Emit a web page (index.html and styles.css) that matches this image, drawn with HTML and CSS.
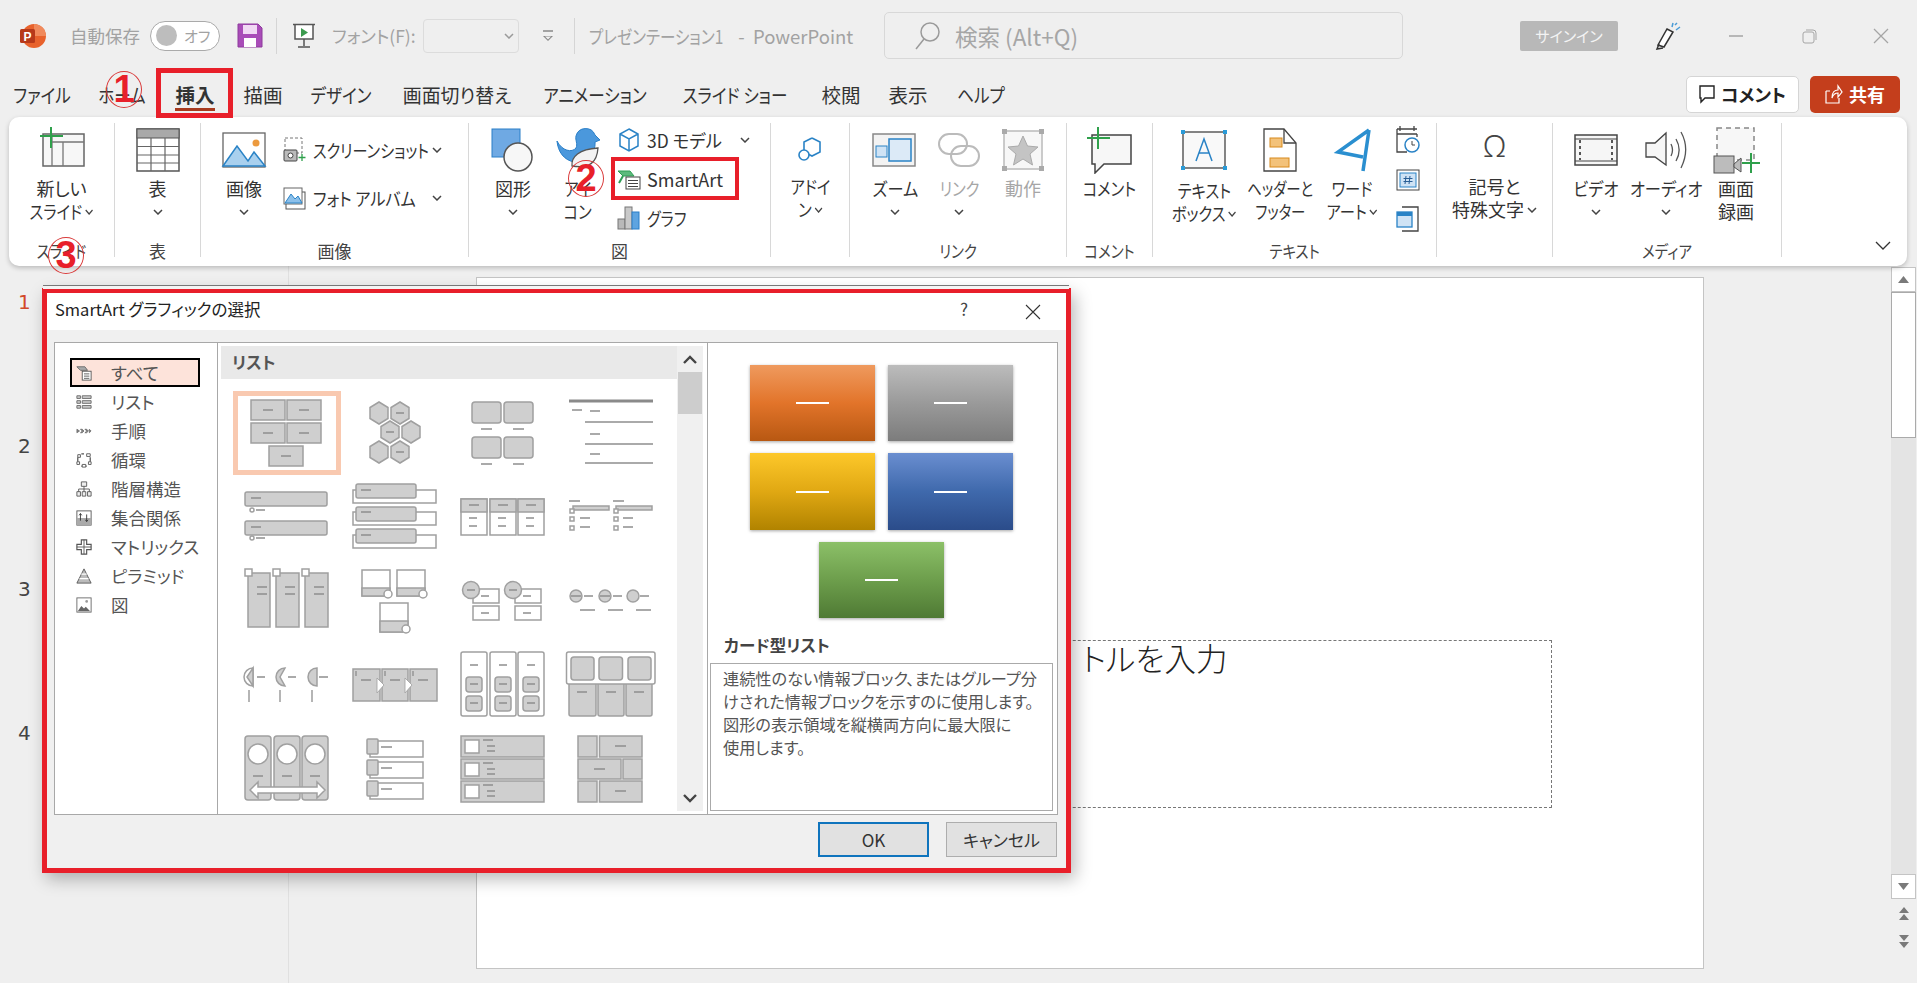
FILE: index.html
```html
<!DOCTYPE html>
<html lang="ja">
<head>
<meta charset="utf-8">
<title>SmartArt グラフィックの選択 - PowerPoint</title>
<link rel="stylesheet" href="styles.css">
</head>
<body>
<div class="app">
  <header class="titlebar">
    <svg class="ppt" width="26" height="26" viewBox="0 0 26 26"><circle cx="14" cy="13" r="12" fill="#e8622c"/><path d="M14 1a12 12 0 0 1 12 12H14z" fill="#f08a5c"/><rect x="0" y="6" width="15" height="14" rx="1.5" fill="#b7391a"/><text x="3.5" y="17.5" class="ppt-p">P</text></svg>
    <span class="qat-label autosave">自動保存</span>
    <span class="toggle"><i class="knob"></i><span>オフ</span></span>
    <svg class="save" width="26" height="25" viewBox="0 0 26 25"><path d="M1 1h20l4 4v19H1z" fill="#a94cb8" stroke="#8d3b9c"/><rect x="6" y="2" width="14" height="9" fill="#f1d9f4"/><rect x="7" y="15" width="12" height="9" fill="#fff"/></svg>
    <i class="tb-sep first"></i>
    <svg class="present" width="24" height="25" viewBox="0 0 24 25"><path d="M1 1.5h22M3 2v14h18V2" fill="#fff" stroke="#555" stroke-width="1.5"/><path d="M9 5l7 4.5-7 4.500z" fill="#3c9a4e"/><path d="M12 16v7M6 24h12" stroke="#555" stroke-width="1.500"/></svg>
    <span class="qat-label font-label">フォント(F):</span>
    <span class="combo"><svg width="10" height="6" viewBox="0 0 10 6"><path d="M1 1l4 4 4-4" fill="none" stroke="#9a9a9a" stroke-width="1.500"/></svg></span>
    <svg class="qat-more" width="14" height="14" viewBox="0 0 14 14"><path d="M2 2h10" stroke="#888" stroke-width="1.500"/><path d="M2 7h10L7 12z" fill="#888"/><path d="M4 7.500h6L7 10.500z" fill="#efefef"/></svg>
    <i class="tb-sep second"></i>
    <span class="doc-title"><span class="dt-k">プレゼンテーション1</span>&nbsp; -&nbsp; PowerPoint</span>
    <div class="search">
      <svg width="28" height="30" viewBox="0 0 28 30"><circle cx="17" cy="11" r="9" fill="none" stroke="#9a9a9a" stroke-width="1.500"/><path d="M11 18L3 28" stroke="#9a9a9a" stroke-width="1.500"/></svg>
      <span>検索 (Alt+Q)</span>
    </div>
    <span class="signin">サインイン</span>
    <svg class="pen" width="28" height="28" viewBox="0 0 28 28"><path d="M14 7l6 3-9 15-6-2z" fill="#fff" stroke="#333" stroke-width="1.500"/><path d="M6 22l-2 5 6-1" fill="none" stroke="#333" stroke-width="1.500"/><path d="M19 5l1-4M23 8l4-3M22 3l2-2" stroke="#4a9bd6" stroke-width="1.500"/></svg>
    <svg class="winbtn minb" width="20" height="4" viewBox="0 0 20 4"><path d="M3 2h14" stroke="#a5a5a5" stroke-width="1.500"/></svg>
    <svg class="winbtn maxb" width="16" height="16" viewBox="0 0 16 16"><rect x="1" y="4" width="11" height="11" rx="2" fill="none" stroke="#a5a5a5"/><path d="M4 2h7a3 3 0 0 1 3 3v7" fill="none" stroke="#a5a5a5"/></svg>
    <svg class="winbtn clsb" width="18" height="18" viewBox="0 0 18 18"><path d="M2 2l14 14M16 2L2 16" stroke="#a5a5a5" stroke-width="1.300"/></svg>
  </header>

  <nav class="tabs">
    <div class="tab-grid">
      <span class="k">ファイル</span><span class="k">ホーム</span><span class="tab-active">挿入</span><span>描画</span><span class="k">デザイン</span><span class="k2">画面切り替え</span><span class="k">アニメーション</span><span class="k">スライド ショー</span><span>校閲</span><span>表示</span><span class="k">ヘルプ</span>
    </div>
    <div class="tab-actions">
      <button class="btn-comment"><svg width="16" height="20" viewBox="0 0 16 20"><path d="M1 2h14v12H6l-4 4v-4H1z" fill="#fff" stroke="#222" stroke-width="1.400"/></svg>コメント</button>
      <button class="btn-share"><svg width="18" height="20" viewBox="0 0 18 20"><path d="M1 7h4M1 7v12h13v-5M7 14c0-6 3-8 6-8V2l4 6-4 5V9c-3 0-5 2-6 5z" fill="none" stroke="#fff" stroke-width="1.200"/></svg>共有</button>
    </div>
  </nav>

  <section class="ribbon">
    <div class="group g-slide">
      <div class="group-body">
        <div class="big w90">
          <svg class="ico" viewBox="0 0 48 48"><rect x="5" y="8" width="41" height="32" fill="#f7f7f7" stroke="#666" stroke-width="1.500"/><path d="M14 16h32M25 16v24M14 8v32" stroke="#777" stroke-width="1.300" fill="none"/><path d="M13 1v21M2 10h23" stroke="#2fa04b" stroke-width="2"/></svg>
          <span class="lbl">新しい</span><span class="lbl k">スライド <svg class="chev" viewBox="0 0 10 6"><path d="M1 1l4 4 4-4"/></svg></span>
        </div>
      </div>
      <div class="group-label k">スライド</div>
    </div>

    <div class="group g-table">
      <div class="group-body">
        <div class="big w70">
          <svg class="ico" viewBox="0 0 48 48"><rect x="3" y="3" width="42" height="42" fill="#fff" stroke="#555" stroke-width="1.500"/><rect x="3" y="3" width="42" height="9" fill="#a9a9a9" stroke="#555"/><path d="M17 12v33M31 12v33M3 20.500h42M3 29h42M3 37h42" stroke="#666" stroke-width="1.200"/></svg>
          <span class="lbl">表</span><span class="lbl"><svg class="chev" viewBox="0 0 10 6"><path d="M1 1l4 4 4-4"/></svg></span>
        </div>
      </div>
      <div class="group-label">表</div>
    </div>

    <div class="group g-image">
      <div class="group-body">
        <div class="big w70">
          <svg class="ico" viewBox="0 0 48 48"><rect x="3" y="7" width="42" height="34" fill="#fff" stroke="#666" stroke-width="1.300"/><path d="M3 40l14-20 11 15 6-9 11 14z" fill="#a9d0ee" stroke="#2a83c6" stroke-width="1.500"/><circle cx="36" cy="17" r="3.500" fill="#ec9a3e"/></svg>
          <span class="lbl">画像</span><span class="lbl"><svg class="chev" viewBox="0 0 10 6"><path d="M1 1l4 4 4-4"/></svg></span>
        </div>
        <div class="col-small pic-col">
          <div class="small tall"><svg width="24" height="26" viewBox="0 0 24 26"><rect x="2" y="1" width="17" height="15" fill="none" stroke="#777" stroke-dasharray="3 2"/><rect x="1" y="13" width="13" height="11" rx="1" fill="#bbb" stroke="#444"/><circle cx="7.500" cy="18.500" r="2.500" fill="#fff" stroke="#444"/><path d="M19 17v7M15.500 20.500h7" stroke="#2fa04b" stroke-width="1.300"/></svg><span class="kl">スクリーンショット</span><svg class="chev" viewBox="0 0 10 6"><path d="M1 1l4 4 4-4"/></svg></div>
          <div class="small tall"><svg width="24" height="26" viewBox="0 0 24 26"><rect x="3" y="7" width="19" height="17" fill="#fff" stroke="#555"/><rect x="1" y="3" width="18" height="16" fill="#fff" stroke="#666"/><path d="M2 18l6-9 4 5 3-3 4 7z" fill="#8cc0ea" stroke="#2a83c6"/></svg><span class="kl2">フォト アルバム</span><svg class="chev" viewBox="0 0 10 6"><path d="M1 1l4 4 4-4"/></svg></div>
        </div>
      </div>
      <div class="group-label">画像</div>
    </div>

    <div class="group g-illust">
      <div class="group-body">
        <div class="big w64">
          <svg class="ico" viewBox="0 0 48 48"><rect x="3" y="3" width="28" height="28" fill="#6fa9e3" stroke="#2a7fc8"/><circle cx="29" cy="31" r="14" fill="#f7f7f7" stroke="#555" stroke-width="1.500"/></svg>
          <span class="lbl">図形</span><span class="lbl"><svg class="chev" viewBox="0 0 10 6"><path d="M1 1l4 4 4-4"/></svg></span>
        </div>
        <div class="big w60">
          <svg class="ico" viewBox="0 0 48 48"><path d="M3 15c5 10 15 12 19 7 2-4-1-8 0-12a10 10 0 0 1 19-1l5 5-5 2c1 12-9 22-21 20C10 34 4 26 3 15z" fill="#4b98dc" stroke="#2a7fc8"/><path d="M18 40c-1-9 7-17 26-18-1 14-8 21-26 18z" fill="#f3f3f3" stroke="#555" stroke-width="1.300"/></svg>
          <span class="lbl k">アイ</span><span class="lbl k">コン</span>
        </div>
        <div class="col-small model-col">
          <div class="small"><svg width="24" height="26" viewBox="0 0 24 26"><path d="M12 2l9 5v12l-9 5-9-5V7zM3 7l9 5 9-5M12 12v12" fill="#fff" stroke="#2a83c6" stroke-width="1.500"/></svg><span class="kl3">3D モデル</span><svg class="chev push" viewBox="0 0 10 6"><path d="M1 1l4 4 4-4"/></svg></div>
          <div class="small smartart"><svg width="24" height="24" viewBox="0 0 24 24"><path d="M1 4h12l4 5H6z" fill="#5dba7d" stroke="#2f9e55"/><path d="M6 9l-4 7" stroke="#2f9e55" stroke-width="2"/><rect x="9" y="10" width="14" height="12" fill="#fff" stroke="#444"/><path d="M11 13.500h10M11 16.500h10M11 19.500h10" stroke="#444"/></svg><span>SmartArt</span></div>
          <div class="small"><svg width="24" height="26" viewBox="0 0 24 26"><rect x="1" y="14" width="7" height="10" fill="#b9b9b9" stroke="#777"/><rect x="8" y="2" width="7" height="22" fill="#c9c9c9" stroke="#777"/><rect x="15" y="7" width="7" height="17" fill="#5ea4e0" stroke="#2a7fc8"/></svg><span class="kl">グラフ</span></div>
        </div>
      </div>
      <div class="group-label">図</div>
    </div>

    <div class="group g-addin">
      <div class="group-body">
        <div class="big w70">
          <svg class="ico" viewBox="0 0 48 48"><path d="M26 12l8 4v10l-8 4-8-4" fill="none" stroke="#2a83c6" stroke-width="1.600"/><path d="M26 12l-8 4v8" fill="none" stroke="#2a83c6" stroke-width="1.600"/><circle cx="18" cy="29" r="5" fill="#fff" stroke="#2a83c6" stroke-width="1.600"/></svg>
          <span class="lbl lift k">アドイ</span><span class="lbl lift k">ン <svg class="chev" viewBox="0 0 10 6"><path d="M1 1l4 4 4-4"/></svg></span>
        </div>
      </div>
    </div>

    <div class="group g-link">
      <div class="group-body">
        <div class="big w64">
          <svg class="ico" viewBox="0 0 48 48"><rect x="2" y="8" width="42" height="32" fill="#f3f3f3" stroke="#888" stroke-width="1.500"/><rect x="5" y="20" width="11" height="11" fill="#cfe3f5" stroke="#2a83c6"/><rect x="18" y="13" width="22" height="22" fill="#dceaf7" stroke="#2a83c6" stroke-width="1.500"/></svg>
          <span class="lbl kw">ズーム</span><span class="lbl"><svg class="chev" viewBox="0 0 10 6"><path d="M1 1l4 4 4-4"/></svg></span>
        </div>
        <div class="big w64 off">
          <svg class="ico" viewBox="0 0 48 48"><rect x="4" y="8" width="28" height="20" rx="10" fill="none" stroke="#bbb" stroke-width="2"/><rect x="16" y="20" width="28" height="20" rx="10" fill="none" stroke="#bbb" stroke-width="2"/></svg>
          <span class="lbl k">リンク</span><span class="lbl"><svg class="chev" viewBox="0 0 10 6"><path d="M1 1l4 4 4-4"/></svg></span>
        </div>
        <div class="big w64 off">
          <svg class="ico" viewBox="0 0 48 48"><rect x="5" y="5" width="38" height="38" fill="#f7f7f7" stroke="#bbb" stroke-width="1.500"/><path d="M3 3h5v5H3zM40 3h5v5h-5zM3 40h5v5H3zM40 40h5v5h-5z" fill="#aaa"/><path d="M24 10l4.500 10 10.500 1-8 7 2.500 11L24 33l-9.500 6 2.500-11-8-7 10.500-1z" fill="#c4c4c4" stroke="#aaa"/></svg>
          <span class="lbl">動作</span><span class="lbl">&nbsp;</span>
        </div>
      </div>
      <div class="group-label k">リンク</div>
    </div>

    <div class="group g-comment">
      <div class="group-body">
        <div class="big w70">
          <svg class="ico" viewBox="0 0 48 48"><path d="M6 9h39v29H18l-9 9v-9H6z" fill="#f7f7f7" stroke="#444" stroke-width="1.500"/><path d="M12 1v22M1 12h23" stroke="#2fa04b" stroke-width="2"/></svg>
          <span class="lbl k">コメント</span><span class="lbl">&nbsp;</span>
        </div>
      </div>
      <div class="group-label k">コメント</div>
    </div>

    <div class="group g-text">
      <div class="group-body">
        <div class="big w78">
          <svg class="ico" viewBox="0 0 48 48"><rect x="3" y="6" width="42" height="36" fill="#f9f9f9" stroke="#444" stroke-width="1.300"/><path d="M1 4h4v4H1zM43 4h4v4h-4zM1 40h4v4H1zM43 40h4v4h-4z" fill="#2a9bd8"/><path d="M16 35l8-22 8 22M19 27h10" fill="none" stroke="#2a83c6" stroke-width="1.500"/></svg>
          <span class="lbl down k">テキスト</span><span class="lbl down k">ボックス <svg class="chev" viewBox="0 0 10 6"><path d="M1 1l4 4 4-4"/></svg></span>
        </div>
        <div class="big w74">
          <svg class="ico" viewBox="0 0 48 48"><path d="M8 3h20l12 14v28H8z" fill="#fff" stroke="#444" stroke-width="1.300"/><path d="M28 3v14h12" fill="none" stroke="#444" stroke-width="1.300"/><rect x="14" y="12" width="12" height="9" fill="#f3c27a" stroke="#d88a1c"/><rect x="14" y="32" width="19" height="9" fill="#f3c27a" stroke="#d88a1c"/></svg>
          <span class="lbl kh">ヘッダーと</span><span class="lbl kh">フッター</span>
        </div>
        <div class="big w70">
          <svg class="ico" viewBox="0 0 48 48"><path d="M41 4L10 26l25 5M41 4l-6 41" fill="none" stroke="#2a8fd0" stroke-width="3.500"/></svg>
          <span class="lbl k">ワード</span><span class="lbl k">アート <svg class="chev" viewBox="0 0 10 6"><path d="M1 1l4 4 4-4"/></svg></span>
        </div>
        <div class="col-small icon-col">
          <svg width="24" height="28" viewBox="0 0 24 28"><path d="M1 3h20M1 8h20M4 0v5M18 0v5M21 8v3M1 3v23h10" fill="none" stroke="#444" stroke-width="1.300"/><circle cx="16" cy="19" r="7" fill="#fff" stroke="#2a83c6" stroke-width="1.500"/><path d="M16 15v4h3" fill="none" stroke="#444"/></svg>
          <svg width="24" height="22" viewBox="0 0 24 22"><rect x="1" y="1" width="22" height="20" fill="#fff" stroke="#444"/><rect x="4" y="4" width="16" height="14" fill="#cfe3f5" stroke="#2a83c6"/><path d="M10 7l-1 8M14 7l-1 8M7.500 9.500h9M7.500 12.500h9" stroke="#2a5f96"/></svg>
          <svg width="24" height="26" viewBox="0 0 24 26"><path d="M6 1h16v24H6" fill="#fff" stroke="#444" stroke-width="1.300"/><rect x="1" y="6" width="15" height="15" fill="#cfe3f5" stroke="#2a83c6" stroke-width="1.300"/><rect x="1" y="6" width="15" height="4" fill="#2a83c6"/></svg>
        </div>
      </div>
      <div class="group-label k">テキスト</div>
    </div>

    <div class="group g-symbol">
      <div class="group-body">
        <div class="big w116">
          <span class="ico omega">Ω</span>
          <span class="lbl lift">記号と</span><span class="lbl lift">特殊文字 <svg class="chev" viewBox="0 0 10 6"><path d="M1 1l4 4 4-4"/></svg></span>
        </div>
      </div>
    </div>

    <div class="group g-media">
      <div class="group-body">
        <div class="big w70">
          <svg class="ico" viewBox="0 0 48 48"><rect x="3" y="9" width="42" height="30" fill="#f6f6f6" stroke="#444" stroke-width="1.500"/><path d="M3 13h42M3 35h42" stroke="#444"/><path d="M8 14v20M40 14v20" stroke="#555" stroke-width="2" stroke-dasharray="3 3"/></svg>
          <span class="lbl kw">ビデオ</span><span class="lbl"><svg class="chev" viewBox="0 0 10 6"><path d="M1 1l4 4 4-4"/></svg></span>
        </div>
        <div class="big w70">
          <svg class="ico" viewBox="0 0 48 48"><path d="M4 17h9l11-10v32L13 31H4z" fill="#f6f6f6" stroke="#444" stroke-width="1.300"/><path d="M29 18c2 4 2 8 0 12M34 13c4 7 4 15 0 22M39 6c6 11 6 24 0 36" fill="none" stroke="#555" stroke-width="1.300"/></svg>
          <span class="lbl kw">オーディオ</span><span class="lbl"><svg class="chev" viewBox="0 0 10 6"><path d="M1 1l4 4 4-4"/></svg></span>
        </div>
        <div class="big w70">
          <svg class="ico" viewBox="0 0 48 48"><rect x="5" y="2" width="37" height="32" fill="#f7f7f7" stroke="#888" stroke-width="1.500" stroke-dasharray="5 4"/><rect x="2" y="30" width="20" height="17" fill="#bcbcbc" stroke="#555"/><path d="M22 38l7-6v14l-7-5z" fill="#bcbcbc" stroke="#555"/><path d="M39 27v20M30 37h18" stroke="#2fa04b" stroke-width="2"/></svg>
          <span class="lbl">画面</span><span class="lbl">録画</span>
        </div>
      </div>
      <div class="group-label k">メディア</div>
    </div>

    <div class="ribbon-end"><svg width="16" height="10" viewBox="0 0 16 10"><path d="M1 1l7 7 7-7" fill="none" stroke="#333" stroke-width="1.300"/></svg></div>
  </section>

  <main class="workspace">
    <aside class="thumbs">
      <span class="num cur">1</span><span class="num">2</span><span class="num">3</span><span class="num">4</span>
    </aside>
    <div class="canvas">
      <div class="slide">
        <div class="placeholder"><span class="ph-gap">サブタイ</span>トルを入力</div>
      </div>
    </div>
    <div class="vscroll">
      <div class="vb"><svg width="11" height="7" viewBox="0 0 11 7"><path d="M0 7l5.500-7L11 7z" fill="#7a7a7a"/></svg></div>
      <div class="vthumb"></div>
      <div class="vtrack"></div>
      <div class="vb"><svg width="11" height="7" viewBox="0 0 11 7"><path d="M0 0l5.500 7L11 0z" fill="#7a7a7a"/></svg></div>
      <div class="vpage"><svg width="12" height="13" viewBox="0 0 12 13"><path d="M1 6l5-6 5 6zM1 13l5-6 5 6z" fill="#7a7a7a"/></svg></div>
      <div class="vpage"><svg width="12" height="13" viewBox="0 0 12 13"><path d="M1 0l5 6 5-6zM1 7l5 6 5-6z" fill="#7a7a7a"/></svg></div>
    </div>
  </main>

  <div class="dialog">
    <div class="dlg-title"><span>SmartArt グラフィックの選択</span>
      <span class="dlg-help">?</span>
      <svg class="dlg-close" width="16" height="16" viewBox="0 0 16 16"><path d="M1 1l14 14M15 1L1 15" stroke="#333" stroke-width="1.100"/></svg>
    </div>
    <div class="dlg-body">
      <div class="panes">
        <ul class="cats">
          <li class="sel"><svg viewBox="0 0 18 18"><path d="M1 2h9l3 4H5z" fill="#aaa" stroke="#666"/><rect x="7" y="7" width="10" height="10" fill="#fff" stroke="#555"/><path d="M9 10h6M9 12.500h6M9 15h6" stroke="#555"/></svg>すべて</li>
          <li><svg viewBox="0 0 18 18"><path d="M1 2h4v3H1zM7 2h10v3H7zM1 7.500h4v3H1zM7 7.500h10v3H7zM1 13h4v3H1zM7 13h10v3H7z" fill="#ccc" stroke="#666"/></svg>リスト</li>
          <li><svg viewBox="0 0 18 18"><path d="M1 7l3 2-3 2zM5 7h2l2 2-2 2H5l2-2zM10 7h2l2 2-2 2h-2l2-2zM15 7l2 2-2 2z" fill="#888" stroke="#555" stroke-width=".7"/></svg>手順</li>
          <li><svg viewBox="0 0 18 18"><path d="M6 2h3M2 6v5M16 6v5M6 16h6" stroke="#555" stroke-width="1.400" fill="none"/><path d="M2 3h3v3H2zM12 2h4v3h-4zM1 11h3v3H1zM14 11h3v3h-3zM7 14h4v3H7z" fill="#fff" stroke="#555"/></svg>循環</li>
          <li><svg viewBox="0 0 18 18"><path d="M6 1h6v5H6zM1 12h4v5H1zM7 12h4v5H7zM13 12h4v5h-4z" fill="#eee" stroke="#555"/><path d="M9 6v3M3 12V9h12v3M9 9v3" fill="none" stroke="#555"/></svg>階層構造</li>
          <li><svg viewBox="0 0 18 18"><rect x="1" y="1" width="16" height="16" fill="#fff" stroke="#555"/><rect x="1" y="9" width="16" height="8" fill="#aaa"/><path d="M5 4v8M12 5v8M3.500 6L5 4l1.500 2M10.500 11l1.500 2 1.500-2" fill="none" stroke="#333"/></svg>集合関係</li>
          <li><svg viewBox="0 0 18 18"><path d="M6 1h6v5h5v6h-5v5H6v-5H1V6h5z" fill="#fff" stroke="#555" stroke-width="1.300"/><path d="M9 1v16M1 9h16" stroke="#555"/></svg>マトリックス</li>
          <li><svg viewBox="0 0 18 18"><path d="M9 1l8 16H1z" fill="#bbb" stroke="#555"/><path d="M6 7h6M4 12h10" stroke="#fff" stroke-width="1.400"/></svg>ピラミッド</li>
          <li><svg viewBox="0 0 18 18"><rect x="1" y="1" width="16" height="16" fill="#fff" stroke="#666"/><path d="M2 16l4-6 3 3 2-2 5 5z" fill="#666"/><circle cx="12" cy="5" r="1.500" fill="#999"/></svg>図</li>
        </ul>
        <div class="gallery">
          <div class="gal-main">
            <div class="gal-head">リスト</div>
            <div class="gal-grid">
              <div class="cell picked"><svg viewBox="0 0 108 84"><path class="g" d="M18 9h34v20H18zM54 9h34v20H54zM18 32h34v20H18zM54 32h34v20H54zM36 55h34v20H36z"/><path class="l" d="M30 19h10M66 19h10M30 42h10M66 42h10M48 65h10"/></svg></div>
              <div class="cell"><svg viewBox="0 0 108 84"><path class="g" d="M38 11l9 5.500v11l-9 5.500-9-5.500v-11zM59 11l9 5.500v11l-9 5.500-9-5.500v-11zM49 30l9 5.500v11l-9 5.500-9-5.500v-11zM70 30l9 5.500v11l-9 5.500-9-5.500v-11zM38 50l9 5.500v11l-9 5.500-9-5.500v-11zM59 50l9 5.500v11l-9 5.500-9-5.500v-11z"/><path class="l" d="M55 22h8M45 41h8M55 61h8"/></svg></div>
              <div class="cell"><svg viewBox="0 0 108 84"><rect class="g" x="23" y="11" width="29" height="21" rx="3"/><rect class="g" x="55" y="11" width="29" height="21" rx="3"/><rect class="g" x="23" y="46" width="29" height="21" rx="3"/><rect class="g" x="55" y="46" width="29" height="21" rx="3"/><path class="l" d="M32 38h11M64 38h11M32 73h11M64 73h11"/></svg></div>
              <div class="cell"><svg viewBox="0 0 108 84"><path class="thick" d="M12 10h84"/><path class="l" d="M15 19h10M33 20h10M28 31h68M33 43h10M28 53h68M33 63h10M28 72h68"/></svg></div>

              <div class="cell"><svg viewBox="0 0 108 84"><rect class="g" x="12" y="17" width="82" height="14" rx="2"/><rect class="g" x="12" y="46" width="82" height="14" rx="2"/><path class="l" d="M18 23h10M18 52h10M23 35h9M23 63h9"/><circle class="w" cx="19" cy="35" r="2"/><circle class="w" cx="19" cy="63" r="2"/></svg></div>
              <div class="cell"><svg viewBox="0 0 108 84"><path class="w" d="M12 15h83v13H12zM12 37h83v13H12zM12 60h83v13H12z"/><rect class="g" x="15" y="9" width="60" height="14" rx="2"/><rect class="g" x="15" y="32" width="60" height="14" rx="2"/><rect class="g" x="15" y="54" width="60" height="14" rx="2"/><path class="l" d="M20 15h10M20 37h10M20 60h10"/></svg></div>
              <div class="cell"><svg viewBox="0 0 108 84"><path class="w" d="M12 24h26v36H12zM41 24h26v36H41zM69 24h26v36H69z"/><path class="g" d="M12 24h26v13H12zM41 24h26v13H41zM69 24h26v13H69z"/><path class="l" d="M20 30h10M49 30h10M77 30h10M20 43h8M20 51h8M49 43h8M49 51h8M77 43h8M77 51h8"/></svg></div>
              <div class="cell"><svg viewBox="0 0 108 84"><path class="l" d="M12 26h11M56 26h11M23 43h10M23 52h10M66 43h10M66 52h10"/><path class="g" d="M16 31h36v4H16zM59 31h36v4H59z"/><path class="w" d="M13 34h4v4h-4zM13 42h4v4h-4zM13 51h4v4h-4zM57 34h4v4h-4zM57 42h4v4h-4zM57 51h4v4h-4z"/></svg></div>

              <div class="cell"><svg viewBox="0 0 108 84"><path class="g" d="M15 14h22v54H15zM43 14h23v54H43zM72 14h23v54H72z"/><path class="w" d="M12 10h7v7h-7zM40 10h7v7h-7zM69 10h7v7h-7z"/><path class="l" d="M24 28h10M24 35h10M52 28h10M52 35h10M81 28h10M81 35h10"/></svg></div>
              <div class="cell"><svg viewBox="0 0 108 84"><path class="w" d="M21 11h28v26H21zM56 11h28v26H56zM39 44h28v29H39z"/><path class="g" d="M21 29h28v8H21zM56 29h28v8H56zM39 62h28v11H39z"/><circle class="w" cx="47" cy="35" r="4"/><circle class="w" cx="82" cy="35" r="4"/><circle class="w" cx="65" cy="70" r="4"/></svg></div>
              <div class="cell"><svg viewBox="0 0 108 84"><path class="w" d="M24 30h26v14H24zM66 30h26v14H66zM24 47h26v14H24zM66 47h26v14H66z"/><circle class="g" cx="22" cy="31" r="8.500"/><circle class="g" cx="64" cy="31" r="8.500"/><path class="l" d="M18 31h8M60 31h8M32 37h8M74 37h8M32 54h8M74 54h8"/></svg></div>
              <div class="cell"><svg viewBox="0 0 108 84"><circle class="g" cx="19" cy="37" r="6"/><circle class="g" cx="48" cy="37" r="6"/><circle class="g" cx="76" cy="37" r="6"/><path class="l" d="M14 37h10M43 37h10M27 37h9M56 37h9M83 37h9M23 51h15M51 51h15M79 51h15"/></svg></div>

              <div class="cell"><svg viewBox="0 0 108 84"><path class="w" d="M20 25a9 9 0 0 0 0 18z"/><path class="g" d="M20 25v18l-6-9z"/><path class="g" d="M52 25a9 9 0 0 0 0 18l-5-9z"/><path class="g" d="M84 25a9 9 0 0 0 0 18z"/><path class="l" d="M16 47v12M47 47v12M79 47v12M24 34h8M55 34h8M86 34h9"/></svg></div>
              <div class="cell"><svg viewBox="0 0 108 84"><path class="g" d="M12 26h27v32H12zM41 26h26v32H41zM69 26h27v32H69z"/><path class="l" d="M15 28v5M44 28v5M72 28v5M20 37h10M49 37h10M77 37h10"/><path class="tri" d="M36 35l7 7-7 8zM64 35l7 7-7 8z"/></svg></div>
              <div class="cell"><svg viewBox="0 0 108 84"><rect class="w" x="12" y="9" width="26" height="64" rx="2"/><rect class="w" x="41" y="9" width="26" height="64" rx="2"/><rect class="w" x="69" y="9" width="26" height="64" rx="2"/><rect class="g" x="17" y="34" width="16" height="15" rx="3"/><rect class="g" x="46" y="34" width="16" height="15" rx="3"/><rect class="g" x="74" y="34" width="16" height="15" rx="3"/><rect class="g" x="17" y="53" width="16" height="15" rx="3"/><rect class="g" x="46" y="53" width="16" height="15" rx="3"/><rect class="g" x="74" y="53" width="16" height="15" rx="3"/><path class="l" d="M21 22h8M50 22h8M78 22h8M21 41h8M50 41h8M78 41h8M21 60h8M50 60h8M78 60h8"/></svg></div>
              <div class="cell"><svg viewBox="0 0 108 84"><rect class="g" x="12" y="38" width="27" height="35" rx="2"/><rect class="g" x="41" y="38" width="26" height="35" rx="2"/><rect class="g" x="69" y="38" width="26" height="35" rx="2"/><rect class="w" x="9.500" y="9" width="88.500" height="32" rx="2"/><rect class="g" x="14" y="14" width="23" height="23" rx="3"/><rect class="g" x="42" y="14" width="23.500" height="23" rx="3"/><rect class="g" x="71" y="14" width="23" height="23" rx="3"/><path class="l" d="M20 49h10M49 49h10M77 49h10"/></svg></div>

              <div class="cell"><svg viewBox="0 0 108 84"><rect class="g" x="12" y="9" width="26" height="64" rx="3"/><rect class="g" x="41" y="9" width="26" height="64" rx="3"/><rect class="g" x="69" y="9" width="26" height="64" rx="3"/><ellipse class="w" cx="25" cy="27" rx="10" ry="10"/><ellipse class="w" cx="54" cy="27" rx="10" ry="10"/><ellipse class="w" cx="82" cy="27" rx="10" ry="10"/><path class="l" d="M20 49h10M49 49h10M77 49h10"/><path class="w" d="M17 63l8-8v5h59v-5l8 8-8 8v-5H25v5z"/></svg></div>
              <div class="cell"><svg viewBox="0 0 108 84"><path class="w" d="M29 14h53v16H29zM29 35h53v16H29zM29 56h53v16H29z"/><rect class="g" x="26" y="12" width="11" height="15" rx="1"/><rect class="g" x="26" y="33" width="11" height="15" rx="1"/><rect class="g" x="26" y="54" width="11" height="15" rx="1"/><path class="l" d="M40 20h11M40 41h11M40 62h11"/></svg></div>
              <div class="cell"><svg viewBox="0 0 108 84"><path class="g" d="M12 9h83v21H12zM12 32h83v20H12zM12 54h83v21H12z"/><path class="w" d="M16 13h14v13H16zM16 36h14v13H16zM16 58h14v13H16z"/><path class="l" d="M34 13h10M38 19h8M38 24h8M34 36h10M38 42h8M38 47h8M34 58h10M38 64h8M38 69h8"/></svg></div>
              <div class="cell"><svg viewBox="0 0 108 84"><path class="g" d="M21 9h19v21H21zM42.500 9H85v21H42.500zM21 32h43v20H21zM66 32h19v20H66zM21 54h19v21H21zM42.500 54H85v21H42.500z"/><path class="l" d="M58 19h11M37 42h11M58 64h11"/></svg></div>
            </div>
          </div>
          <div class="gal-scroll">
            <svg width="14" height="10" viewBox="0 0 14 10"><path d="M1 8l6-6 6 6" fill="none" stroke="#444" stroke-width="2.400"/></svg>
            <i class="gal-thumb"></i>
            <svg class="gal-down" width="14" height="10" viewBox="0 0 14 10"><path d="M1 2l6 6 6-6" fill="none" stroke="#444" stroke-width="2.400"/></svg>
          </div>
        </div>
        <div class="preview">
          <div class="tiles">
            <div class="tile orange"><i></i></div><div class="tile gray"><i></i></div>
            <div class="tile yellow"><i></i></div><div class="tile blue"><i></i></div>
            <div class="tile green"><i></i></div>
          </div>
          <div class="pv-title">カード型リスト</div>
          <div class="pv-desc">連続性のない情報ブロック、またはグループ分けされた情報ブロックを示すのに使用します。図形の表示領域を縦横両方向に最大限に<br>使用します。</div>
        </div>
      </div>
      <div class="dlg-foot">
        <button class="dbtn default">OK</button>
        <button class="dbtn">キャンセル</button>
      </div>
    </div>
  </div>

  <div class="mark box-tab"></div>
  <div class="circ c1">1</div>
  <div class="circ c2">2</div>
  <div class="circ c3">3</div>
</div>
</body>
</html>
```

FILE: styles.css
```css
* { box-sizing: border-box; }
html, body { margin: 0; padding: 0; }
body { background: #efefef; font-family: "Noto Sans CJK JP", "Noto Sans", sans-serif; font-feature-settings: "palt"; color: #333; overflow: hidden; }
.app { position: relative; width: 1917px; height: 983px; overflow: hidden; display: flex; flex-direction: column; }

/* narrow kana, as the UI font of the original has */
.k { transform: scaleX(.85); }
.k2 { transform: scaleX(.97); }
.kh { transform: scaleX(.8); }
.kw { transform: scaleX(.9); }
.kl, .kl2, .kl3 { display: inline-block; transform-origin: left center; }
.kl { transform: scaleX(.84); }
.kl2 { transform: scaleX(.9); }
.kl3 { transform: scaleX(.97); }

/* title bar */
.titlebar { height: 71px; flex: none; display: flex; align-items: center; padding-left: 20px; color: #a2a2a2; }
.ppt-p { font: bold 12px "Liberation Sans", sans-serif; fill: #fff; }
.qat-label { font-size: 17.500px; line-height: 24px; white-space: nowrap; }
.autosave { margin-left: 24px; width: 72px; }
.toggle { margin-left: 8px; width: 70px; height: 30px; border: 1px solid #aaa; border-radius: 15px; background: #fff; display: flex; align-items: center; padding-left: 5px; gap: 7px; font-size: 15px; }
.knob { width: 21px; height: 21px; border-radius: 50%; background: #bdbdbd; }
.save { margin-left: 17px; }
.tb-sep { width: 1px; height: 36px; background: #d5d5d5; }
.tb-sep.first { margin-left: 13px; }
.present { margin-left: 15px; }
.font-label { margin-left: 16px; width: 91px; }
.combo { width: 96px; height: 34px; border: 1px solid #dcdcdc; border-radius: 4px; display: flex; align-items: center; justify-content: flex-end; padding-right: 4px; }
.qat-more { margin-left: 22px; }
.tb-sep.second { margin-left: 19px; }
.doc-title { margin-left: 14px; width: 295px; font-size: 18.500px; white-space: nowrap; }
.dt-k { display: inline-block; transform: scaleX(.84); transform-origin: left center; margin-right: -19px; }
.search { width: 519px; height: 47px; border: 1px solid #d8d8d8; border-radius: 5px; display: flex; align-items: center; padding-left: 28px; gap: 14px; font-size: 22.500px; color: #a6a6a6; }
.signin { margin-left: 117px; width: 98px; height: 30px; background: #b8b8b8; border-radius: 2px; color: #f3f3f3; font-size: 15px; display: flex; align-items: center; justify-content: center; }
.pen { margin-left: 35px; }
.minb { margin-left: 45px; }
.maxb { margin-left: 56px; }
.clsb { margin-left: 54px; }

/* tabs */
.tabs { height: 46px; flex: none; display: flex; align-items: center; justify-content: space-between; padding-right: 17px; }
.tab-grid { display: grid; grid-template-columns: 84px 76px 70px 66px 90px 142px 134px 146px 66px 68px 78px; font-size: 19.500px; color: #333; }
.tab-grid span { text-align: center; white-space: nowrap; }
.tab-active { font-weight: 700; position: relative; }
.tab-active::after { content: ""; position: absolute; left: 15px; right: 15px; bottom: -2px; height: 3px; background: #a83a1e; }
.tab-actions { display: flex; gap: 11px; }
.tab-actions button { height: 37px; border-radius: 5px; font: 700 18px "Noto Sans CJK JP", sans-serif; font-feature-settings: "palt"; display: flex; align-items: center; justify-content: center; gap: 6px; }
.btn-comment { width: 113px; background: #fff; border: 1px solid #d5d5d5; color: #222; }
.btn-share { width: 90px; background: #c43e1c; border: 0; color: #fff; }

/* ribbon */
.ribbon { height: 149px; flex: none; margin: 0 10px 0 9px; padding-top: 6px; background: #fff; border-radius: 10px; box-shadow: 0 2px 5px rgba(0,0,0,.22); display: flex; position: relative; z-index: 1; }
.group { height: 134px; flex: none; border-right: 1px solid #d8d8d8; display: flex; flex-direction: column; }
.g-slide { width: 106px; } .g-table { width: 86px; } .g-image { width: 268px; } .g-illust { width: 302px; }
.g-addin { width: 79px; } .g-link { width: 217px; } .g-comment { width: 86px; } .g-text { width: 284px; }
.g-symbol { width: 116px; } .g-media { width: 229px; }
.group-body { flex: 1; display: flex; justify-content: center; min-height: 0; }
.group-label { height: 22px; margin-bottom: -5px; text-align: center; font-size: 17px; line-height: 22px; color: #444; white-space: nowrap; }
.g-image .group-body { justify-content: flex-start; padding-left: 8px; }
.g-illust .group-body { justify-content: flex-start; padding-left: 12px; gap: 3px; }
.g-link .group-body { justify-content: flex-start; padding-left: 13px; }
.g-text .group-body { justify-content: flex-start; padding-left: 12px; }
.g-media .group-body { justify-content: flex-start; padding-left: 8px; }
.big { display: flex; flex-direction: column; align-items: center; flex: none; color: #333; }
.w60 { width: 60px; } .w64 { width: 64px; } .w70 { width: 70px; } .w74 { width: 74px; } .w78 { width: 78px; } .w90 { width: 90px; } .w116 { width: 115px; }
.ico { width: 48px; height: 48px; margin: 3px 0; flex: none; }
.lbl { height: 23px; line-height: 23px; font-size: 18px; white-space: nowrap; display: flex; align-items: center; gap: 3px; }
.lift { position: relative; top: -2px; }
.down { position: relative; top: 2px; }
.off { color: #a6a6a6; }
.chev { width: 10px; height: 6px; fill: none; stroke: #444; stroke-width: 1.500; flex: none; }
.omega { font: 300 31px/48px "Noto Sans", sans-serif; text-align: center; color: #444; position: relative; top: -5px; }
.col-small { display: flex; flex-direction: column; margin-top: -3px; }
.pic-col { margin-top: 3px; margin-left: 4px; }
.model-col { width: 155px; }
.small { height: 39px; display: flex; align-items: center; gap: 6px; font-size: 18px; white-space: nowrap; }
.small.tall { height: 48px; }
.pic-col .small span { width: 113px; }
.model-col .small { padding-left: 6px; }
.push { margin-left: 10px; }
.smartart { width: 128px; height: 43px; margin: -2px 0; border: 4px solid #e81f2a; padding-left: 2px !important; }
.icon-col { margin-left: 9px; margin-top: 3px; gap: 15px; }

.ribbon-end { flex: 1; display: flex; align-items: flex-end; justify-content: flex-end; padding: 0 16px 15px 0; }

/* workspace */
.workspace { flex: 1; display: flex; min-height: 0; }
.thumbs { width: 289px; flex: none; border-right: 1px solid #e0e0e0; display: flex; flex-direction: column; padding: 21px 0 0 18px; gap: 113.500px; }
.num { font: 20px/30px "DejaVu Sans", sans-serif; color: #444; }
.num.cur { color: #d2492a; }
.canvas { flex: 1; display: flex; justify-content: center; padding-top: 11px; }
.slide { width: 1228px; height: 692px; background: #fff; border: 1px solid #c4c4c4; position: relative; }
.placeholder { position: absolute; left: 300px; top: 362px; width: 775px; height: 168px; border: 1px dashed #777; padding: 0 0 0 179px; font-size: 31.500px; line-height: 32px; color: #222; font-weight: 300; }
.ph-gap { margin-right: 12px; }
.vscroll { width: 26px; flex: none; margin-right: 0; display: flex; flex-direction: column; }
.vb { width: 25px; height: 25px; background: #fff; border: 1px solid #c4c4c4; display: flex; align-items: center; justify-content: center; flex: none; }
.vthumb { width: 25px; height: 146px; background: #fff; border: 1px solid #aaa; flex: none; }
.vtrack { width: 25px; flex: 1; background: #e4e4e4; }
.vpage { width: 25px; height: 28px; flex: none; display: flex; align-items: center; justify-content: center; }
.vscroll .vb:first-child { margin-top: 1px; }
.vpage:last-child { margin-bottom: 28px; }

/* dialog */
.dialog { position: absolute; left: 42px; top: 288px; width: 1029px; height: 585px; border: 5px solid #e81f2a; background: #f0f0f0; box-shadow: 4px 6px 16px rgba(0,0,0,.28); z-index: 2; display: flex; flex-direction: column; }
.dialog::before { content: ""; position: absolute; left: -4px; right: -3px; top: -8px; height: 3px; border-top: 1px solid #777; background: #f4f4f4; }
.dlg-title { height: 37px; flex: none; background: #fff; display: flex; align-items: center; padding: 0 25px 6px 8px; font-size: 16.500px; color: #222; position: relative; }
.dlg-help { margin-left: auto; font-size: 17px; color: #444; }
.dlg-close { margin-left: 57px; margin-top: 6px; }
.dlg-body { flex: 1; min-height: 0; display: flex; flex-direction: column; padding: 12px 8px 0 7px; }
.panes { height: 473px; flex: none; display: flex; border: 1px solid #a8a8a8; background: #fff; }
.cats { width: 163px; flex: none; margin: 0; padding: 15px 0 0 15px; list-style: none; border-right: 1px solid #a8a8a8; }
.cats li { width: 130px; height: 29px; display: flex; align-items: center; gap: 19px; padding-left: 6px; font-size: 17.500px; color: #555; }
.cats svg { width: 16px; height: 16px; flex: none; }
.cats .sel { background: #fde3da; outline: 2px dotted #000; outline-offset: -2px; box-shadow: inset 0 0 0 2px #000; }
.gallery { width: 490px; flex: none; display: flex; border-right: 1px solid #a8a8a8; padding: 3px 4px 3px 3px; }
.gal-main { width: 456px; flex: none; }
.gal-head { height: 33px; background: #e9e9e9; padding-left: 11px; font-size: 16.500px; font-weight: 700; line-height: 32px; color: #555; }
.gal-grid { display: grid; grid-template-columns: repeat(4, 108px); grid-auto-rows: 84px; padding: 12px 0 0 12px; }
.cell { width: 108px; height: 84px; }
.cell svg { display: block; width: 108px; height: 84px; }
.picked { box-shadow: inset 0 0 0 5px #f9c9b0; }
.g { fill: #cfcfcf; stroke: #a0a0a0; stroke-width: 1.500; }
.w { fill: #fff; stroke: #a0a0a0; stroke-width: 1.500; }
.l { fill: none; stroke: #8e8e8e; stroke-width: 1.300; }
.tri { fill: #fff; stroke: #a0a0a0; stroke-width: .8; }
.thick { fill: none; stroke: #8a8a8a; stroke-width: 3; }
.gal-scroll { width: 26px; flex: none; background: #f0f0f0; display: flex; flex-direction: column; align-items: center; padding-top: 9px; }
.gal-thumb { width: 24px; height: 42px; background: #cdcdcd; margin-top: 7px; }
.gal-down { margin-top: auto; margin-bottom: 8px; }
.preview { flex: 1; min-width: 0; padding: 22px 4px 0 2px; }
.tiles { display: grid; grid-template-columns: 125px 125px; gap: 12px 13px; justify-content: center; }
.tile { height: 76px; display: flex; align-items: center; justify-content: center; box-shadow: 0 1px 3px rgba(0,0,0,.35); }
.tile i { width: 33px; height: 2px; background: #fff; }
.orange { background: linear-gradient(#ef9a5e, #e2742a 50%, #b85812); }
.gray { background: linear-gradient(#bcbcbc, #9a9a9a 50%, #7c7c7c); }
.yellow { background: linear-gradient(#fdc82a, #e0a813 50%, #b18300); height: 77px; }
.blue { background: linear-gradient(#6a8ed0, #3f69ac 50%, #2b4c8a); height: 77px; }
.green { grid-column: 1 / 3; width: 125px; justify-self: center; background: linear-gradient(#8cc068, #6d9e4c 50%, #4f7a34); }
.pv-title { margin: 16px 0 0 14px; height: 29px; line-height: 23px; font-size: 16.500px; font-weight: 700; color: #444; }
.pv-desc { height: 148px; border: 1px solid #aaa; padding: 3px 8px 0 12px; font-size: 16.200px; line-height: 23px; color: #555; }
.dlg-foot { flex: 1; display: flex; justify-content: flex-end; gap: 17px; padding: 7px 1px 0 0; }
.dbtn { width: 111px; height: 35px; background: #e1e1e1; border: 1px solid #adadad; font: 17px "Noto Sans CJK JP", sans-serif; font-feature-settings: "palt"; color: #333; }
.dbtn.default { border: 2px solid #0f74bd; }

/* annotations */
.mark { position: absolute; border: 5px solid #e81f2a; z-index: 3; }
.box-tab { left: 156px; top: 68px; width: 77px; height: 50px; }
.circ { position: absolute; width: 36px; height: 37px; border: 1.500px solid #d93a3a; border-radius: 50%; color: #e81f2a; font: 700 38px/35px "Liberation Sans", sans-serif; text-align: center; z-index: 4; }
.c1 { left: 106px; top: 71px; }
.c2 { left: 568px; top: 160px; }
.c3 { left: 48px; top: 237px; }
```
